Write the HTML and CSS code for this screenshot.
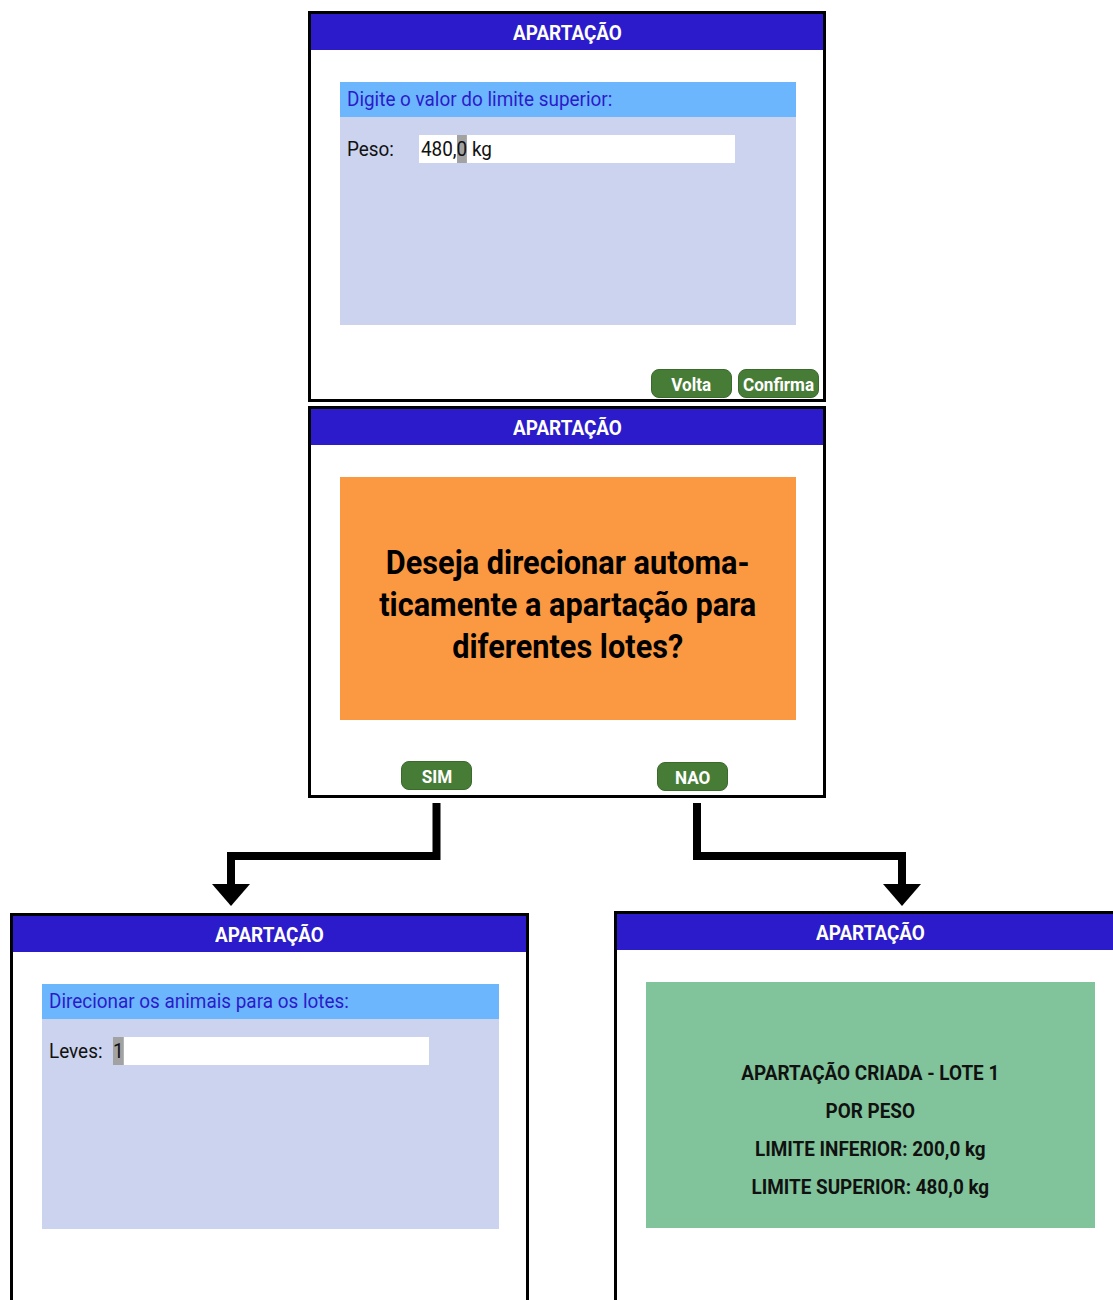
FILE: index.html
```html
<!DOCTYPE html>
<html lang="pt-BR">
<head>
  <meta charset="UTF-8" />
  <title>Apartação</title>
  <link rel="stylesheet" href="styles.css">
</head>
<body>
  <div class="canvas">

    <!-- tela 1: limite superior -->
    <div class="screen screen-limit">
      <div class="screen-title"><span class="narrow">APARTAÇÃO</span></div>
      <div class="screen-body">
        <div class="form-box">
          <div class="prompt"><span class="narrow left">Digite o valor do limite superior:</span></div>
          <div class="field">
            <span class="field-label label-peso"><span class="narrow left">Peso:</span></span>
            <span class="field-input"><span class="narrow left">480,<span class="cursor">0</span> kg</span></span>
          </div>
        </div>
      </div>
      <div class="screen-foot foot-right">
        <button class="btn"><span class="narrow">Volta</span></button>
        <button class="btn"><span class="narrow">Confirma</span></button>
      </div>
    </div>

    <!-- tela 2: pergunta -->
    <div class="screen screen-ask">
      <div class="screen-title"><span class="narrow">APARTAÇÃO</span></div>
      <div class="screen-body">
        <div class="ask-box">
          <span class="narrow wide">Deseja direcionar automa-<br>ticamente a apartação para<br>diferentes lotes?</span>
        </div>
      </div>
      <div class="screen-foot foot-split">
        <button class="btn btn-small"><span class="narrow">SIM</span></button>
        <button class="btn btn-small btn-low"><span class="narrow">NAO</span></button>
      </div>
    </div>

    <!-- tela 3: lotes -->
    <div class="screen screen-lots">
      <div class="screen-title"><span class="narrow">APARTAÇÃO</span></div>
      <div class="screen-body">
        <div class="form-box tall">
          <div class="prompt"><span class="narrow left">Direcionar os animais para os lotes:</span></div>
          <div class="field">
            <span class="field-label label-leves"><span class="narrow left">Leves:</span></span>
            <span class="field-input"><span class="narrow left"><span class="cursor">1</span></span></span>
          </div>
        </div>
      </div>
    </div>

    <!-- tela 4: resultado -->
    <div class="screen screen-done">
      <div class="screen-title"><span class="narrow">APARTAÇÃO</span></div>
      <div class="screen-body">
        <div class="done-box">
          <span class="narrow">
            APARTAÇÃO CRIADA - LOTE 1<br>
            POR PESO<br>
            LIMITE INFERIOR: 200,0 kg<br>
            LIMITE SUPERIOR: 480,0 kg
          </span>
        </div>
      </div>
    </div>

    <svg class="arrows" width="1113" height="1300" viewBox="0 0 1113 1300">
      <polyline points="436.5,803 436.5,856 231,856 231,886" />
      <polygon points="212,884 250,884 231,906" />
      <polyline points="697,803 697,856 902,856 902,886" />
      <polygon points="883,884 921,884 902,906" />
    </svg>
  </div>
</body>
</html>
```

FILE: styles.css
```css
body {
  margin: 0;
  background: #fff;
  font-family: Roboto, "Liberation Sans", sans-serif;
}
.canvas {
  position: relative;
  width: 1113px;
  height: 1300px;
  overflow: hidden;
}
/* the panel font is a condensed face; squeeze Roboto to match */
.narrow {
  display: inline-block;
  transform: scaleX(0.9);
  white-space: nowrap;
}
.narrow.left {
  transform-origin: left center;
}
.narrow.wide {
  transform: scaleX(0.93);
}
.screen {
  position: absolute;
  border: 3px solid #000;
  background: #fff;
  display: flex;
  flex-direction: column;
}
.screen-limit {
  left: 308px;
  top: 11px;
  width: 512px;
  height: 385px;
}
.screen-ask {
  left: 308px;
  top: 406px;
  width: 512px;
  height: 386px;
}
.screen-lots {
  left: 10px;
  top: 913px;
  width: 513px;
  height: 400px;
}
.screen-done {
  left: 614px;
  top: 911px;
  width: 506px;
  height: 400px;
}
.screen-title {
  height: 36px;
  line-height: 38px;
  background: #2c1bca;
  color: #fff;
  font-weight: bold;
  font-size: 21px;
  text-align: center;
}
.screen-body {
  padding: 32px 27px 0 29px;
}
.form-box {
  background: #cbd3ee;
  height: 243px;
}
.form-box.tall {
  height: 245px;
}
.prompt {
  background: #6cb6fd;
  color: #2c1bca;
  height: 35px;
  line-height: 35px;
  padding-left: 7px;
  font-size: 21px;
}
.field {
  display: flex;
  align-items: center;
  margin-top: 18px;
  padding-left: 7px;
  font-size: 21px;
  color: #111;
}
.label-peso {
  width: 72px;
}
.label-leves {
  width: 64px;
}
.field-input {
  background: #fff;
  width: 316px;
  height: 28px;
  line-height: 28px;
  padding-left: 2px;
  box-sizing: border-box;
}
.screen-lots .field-input {
  padding-left: 0;
}
.cursor {
  background: #a2a2a2;
  display: inline-block;
  height: 28px;
}
.ask-box {
  background: #fb9943;
  height: 243px;
  display: flex;
  align-items: center;
  justify-content: center;
  text-align: center;
  font-weight: bold;
  font-size: 33px;
  line-height: 42px;
  padding-top: 12px;
  box-sizing: border-box;
  color: #000;
}
.done-box {
  background: #81c49b;
  height: 246px;
  width: 449px;
  padding-top: 72px;
  box-sizing: border-box;
  text-align: center;
  font-weight: bold;
  font-size: 21px;
  line-height: 38px;
  color: #111;
}
.screen-foot {
  margin-top: auto;
  display: flex;
}
.foot-right {
  justify-content: flex-end;
  gap: 6px;
  padding: 0 4px 1px 0;
}
.foot-split {
  gap: 185px;
  padding: 0 0 4px 90px;
  align-items: flex-start;
}
.btn {
  font-family: inherit;
  background: #477c37;
  color: #fff;
  font-weight: bold;
  font-size: 19px;
  border: 1px solid #3b6a2d;
  border-radius: 8px;
  width: 81px;
  height: 29px;
  padding: 0;
  line-height: 29px;
}
.btn-small {
  width: 71px;
}
.btn-low {
  margin-top: 1px;
}
.arrows {
  position: absolute;
  left: 0;
  top: 0;
  pointer-events: none;
}
.arrows polyline {
  fill: none;
  stroke: #000;
  stroke-width: 8;
}
.arrows polygon {
  fill: #000;
}
```
